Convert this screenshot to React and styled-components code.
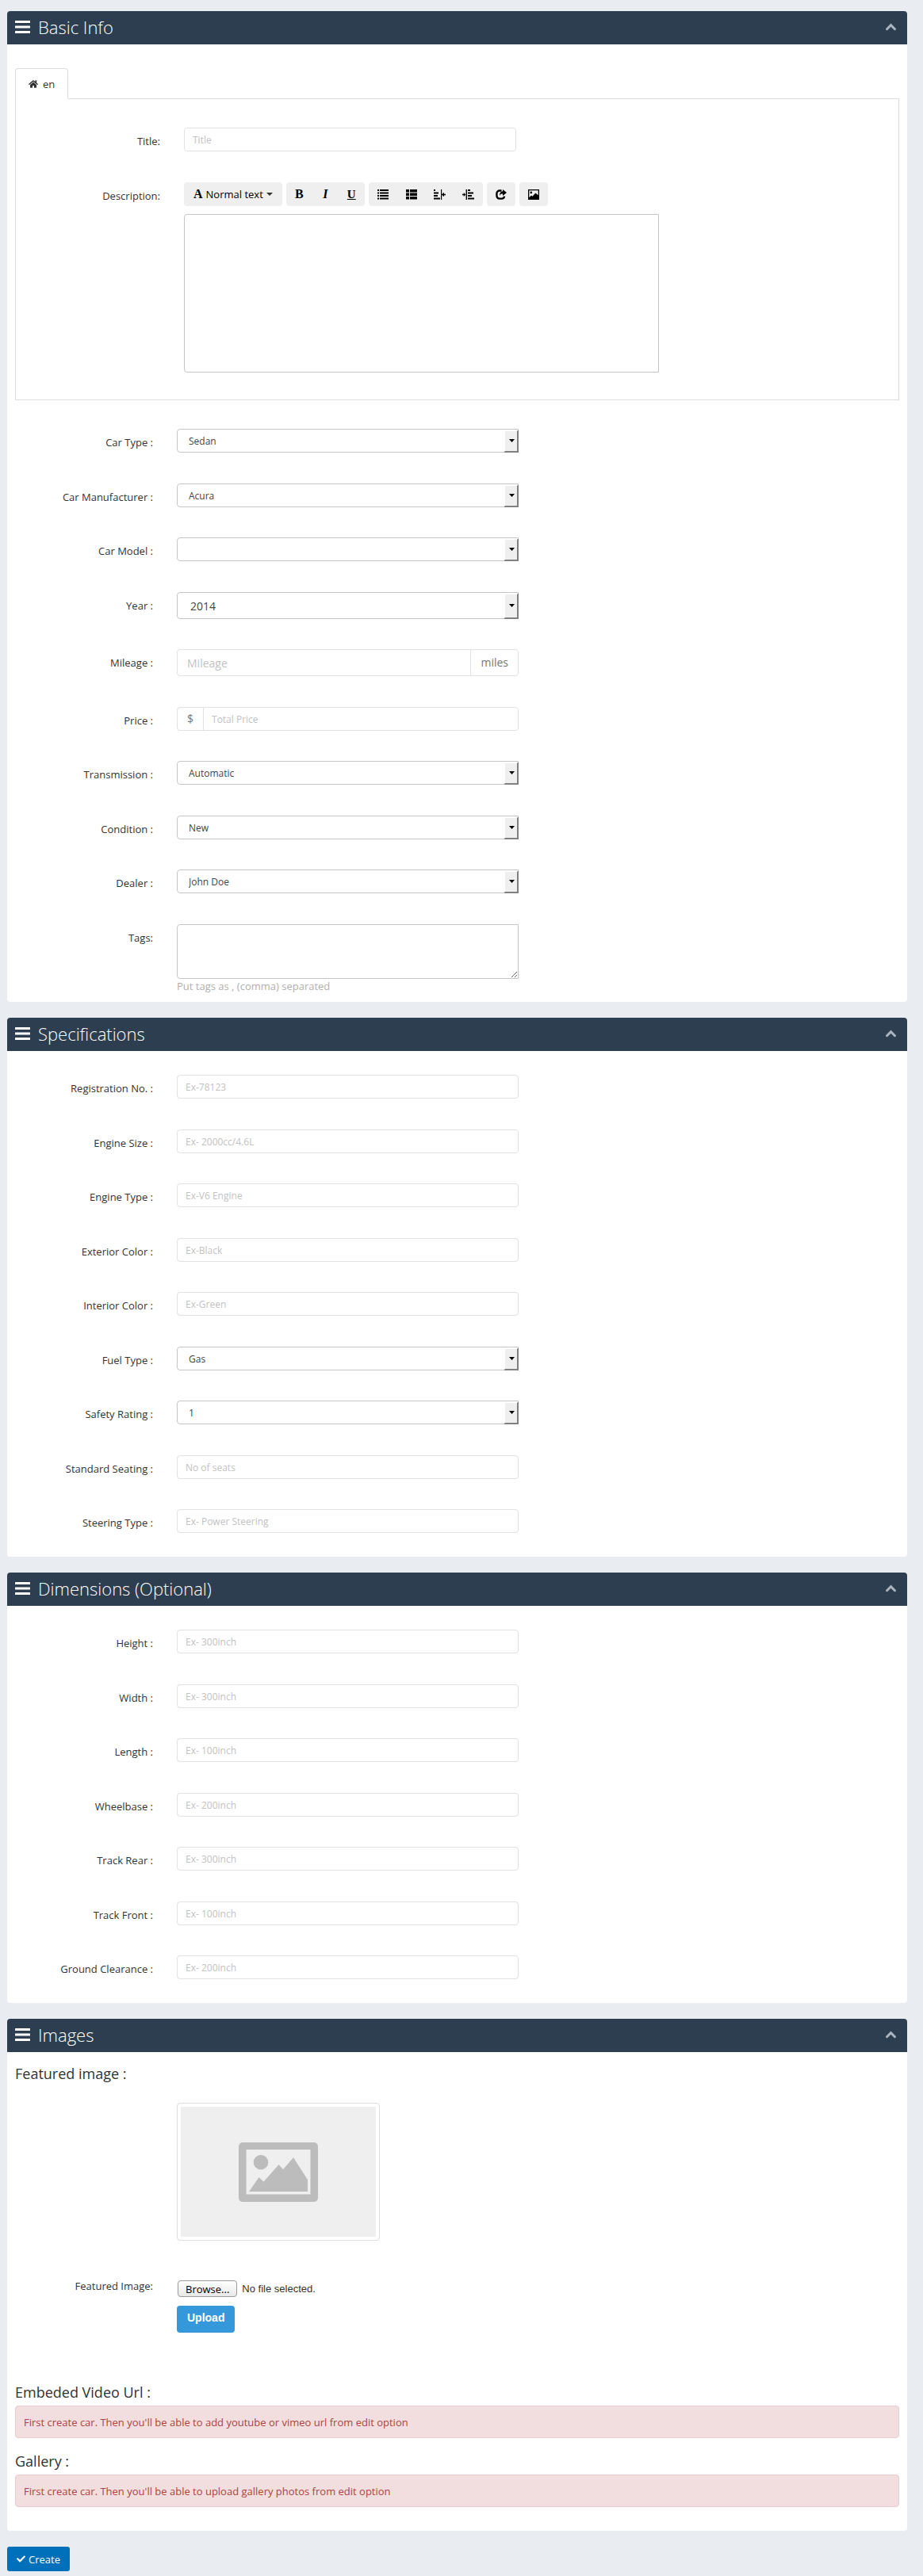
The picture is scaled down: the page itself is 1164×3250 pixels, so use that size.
import React, { useRef, useState } from 'react';
import styled, { createGlobalStyle } from 'styled-components';
import { FaHome, FaCheck } from 'react-icons/fa';

const GlobalStyle = createGlobalStyle`
  * {
    box-sizing: border-box;
  }

  body {
    margin: 0;
    background: #e9edf2;
    color: #333;
    font-family: 'Open Sans', 'Liberation Sans', sans-serif;
    font-size: 13px;
    line-height: 18px;
  }

  input, select, textarea, button {
    font-family: inherit;
  }
`;

const Page = styled.form`
  padding: 14px 20px 6px 9px;
`;

const Portlet = styled.section`
  margin-bottom: 20px;
  background: #fff;
  border-radius: 4px;
  overflow: hidden;
`;

const PortletHeader = styled.header`
  display: flex;
  align-items: center;
  gap: 10px;
  height: 42px;
  padding: 0 13px 2px 10px;
  background: #2c3e50;
  color: #fff;
`;

const PortletTitle = styled.h2`
  flex: 1;
  margin: 0;
  font-size: 22px;
  font-weight: 300;
  line-height: 40px;
`;

const CollapseButton = styled.button`
  display: flex;
  padding: 0;
  border: none;
  background: none;
  color: #a9b4c0;
  cursor: pointer;
`;

const PortletBody = styled.div`
  padding: 30px 10px ${props => (props.$tight ? '11px' : '30px')};
`;

const TabList = styled.div`
  display: flex;
`;

const Tab = styled.button`
  display: flex;
  align-items: center;
  gap: 6px;
  height: 39px;
  margin-bottom: -1px;
  padding: 0 16px;
  border: 1px solid #ddd;
  border-bottom-color: #fff;
  border-radius: 4px 4px 0 0;
  background: #fff;
  color: #333;
  font-size: 13px;
  z-index: 1;
`;

const TabPanel = styled.div`
  margin-bottom: 36px;
  padding: 36px 0 34px;
  border: 1px solid #ddd;
`;

/* rows sit on a 137px rhythm for every two fields */
const Fields = styled.div`
  display: flex;
  flex-direction: column;
`;

const Row = styled.div`
  display: flex;
  align-items: flex-start;
  margin-bottom: 39px;

  &:nth-child(even) {
    margin-bottom: 38px;
  }

  &:last-child {
    margin-bottom: 0;
  }
`;

const Label = styled.label`
  flex: none;
  width: ${props => (props.$wide ? '182px' : '174px')};
  padding-top: 8px;
  text-align: right;
`;

const Control = styled.div`
  flex: 1;
  max-width: ${props => props.$max || '431px'};
  margin-left: 30px;
`;

const Input = styled.input`
  display: block;
  width: 100%;
  height: ${props => (props.$large ? '34px' : '30px')};
  padding: 0 ${props => (props.$large ? '12px' : '10px')};
  border: 1px solid #e1e1e1;
  border-radius: 4px;
  background: #fff;
  color: #555;
  font-size: ${props => (props.$large ? '14px' : '12px')};

  &::placeholder {
    color: #c2c2c2;
  }
`;

const InputGroup = styled.div`
  display: flex;
  border: 1px solid #e1e1e1;
  border-radius: 4px;

  ${Input} {
    flex: 1;
    min-width: 0;
    height: ${props => (props.$large ? '32px' : '28px')};
    border: none;
  }
`;

const Addon = styled.span`
  display: flex;
  align-items: center;
  padding: 0 12px;
  border: 0 solid #e1e1e1;
  border-width: ${props => (props.$before ? '0 1px 0 0' : '0 0 0 1px')};
  color: #777;
  font-size: 14px;
`;

const SelectBox = styled.div`
  position: relative;

  &::after {
    content: '';
    position: absolute;
    top: 1px;
    right: 0;
    bottom: 0;
    width: 15px;
    border: 2px solid;
    border-color: #fff #808080 #808080 #fff;
    background: #efefef;
    pointer-events: none;
  }

  svg {
    position: absolute;
    top: 50%;
    right: 5px;
    margin-top: -2px;
    z-index: 1;
    pointer-events: none;
  }
`;

const Select = styled.select`
  display: block;
  width: 100%;
  height: ${props => (props.$large ? '34px' : '30px')};
  padding: 0 ${props => (props.$large ? '16px' : '14px')};
  border: 1px solid #c6c6c6;
  border-radius: 4px 0 0 4px;
  background: #fff;
  color: #444;
  font-size: ${props => (props.$large ? '14px' : '12px')};
  appearance: none;
`;

const TagsInput = styled.textarea`
  display: block;
  width: 100%;
  height: 69px;
  padding: 5px 10px;
  border: 1px solid #c6c6c6;
  border-radius: 4px 0 0 4px;
  font-size: 12px;
`;

const HelpText = styled.p`
  margin: 0;
  color: #b0b0b0;
`;

const Toolbar = styled.div`
  display: flex;
  flex-wrap: wrap;
  gap: 5px;
  margin-bottom: 10px;
`;

const ToolGroup = styled.div`
  display: flex;
  border-radius: 4px;
  background: #efefef;
`;

const ToolButton = styled.button`
  display: flex;
  align-items: center;
  justify-content: center;
  gap: 4px;
  min-width: ${props => (props.$letter ? '33px' : '36px')};
  height: 30px;
  padding: 0 ${props => (props.$menu ? '12px' : '0')};
  border: none;
  background: none;
  color: #000;
  font-size: 13px;
  cursor: pointer;
`;

const Glyph = styled.span`
  font-family: 'Liberation Serif', serif;
  font-size: ${props => (props.$underline ? '15px' : '16px')};
  font-weight: bold;
  font-style: ${props => (props.$italic ? 'italic' : 'normal')};
  text-decoration: ${props => (props.$underline ? 'underline' : 'none')};
`;

const Editor = styled.textarea`
  display: block;
  width: 100%;
  height: 200px;
  padding: 6px 10px;
  border: 1px solid #c6c6c6;
  border-radius: 4px 0 0 4px;
  font-size: 13px;
  resize: none;
`;

const ImagesBody = styled.div`
  padding: 15px 10px 30px;
`;

const SubHeading = styled.h3`
  margin: 0 0 5px;
  font-size: 18px;
  font-weight: 400;
  line-height: 24px;
`;

const Thumbnail = styled.div`
  width: 256px;
  margin: 25px 0 40px 204px;
  padding: 4px;
  border: 1px solid #ddd;
  border-radius: 4px;
`;

const Placeholder = styled.div`
  display: flex;
  align-items: center;
  justify-content: center;
  height: 164px;
  background: #efefef;
`;

const UploadRow = styled.div`
  display: flex;
  align-items: flex-start;
  margin-bottom: 63px;
`;

const FilePicker = styled.div`
  display: flex;
  align-items: center;
  gap: 6px;
  margin: 10px 0 11px 1px;
  font-family: 'Liberation Sans', sans-serif;
  font-size: 13px;

  input {
    display: none;
  }
`;

const BrowseButton = styled.button`
  height: 21px;
  padding: 0 9px;
  border: 1px solid #999;
  border-radius: 4px;
  background: linear-gradient(#fff, #e8e8e8);
  color: #000;
  font-family: 'Open Sans', sans-serif;
  font-size: 13px;
  line-height: 18px;
`;

const UploadButton = styled.button`
  height: 34px;
  padding: 0 13px 4px;
  border: none;
  border-radius: 4px;
  background: #3598db;
  color: #fff;
  font-family: 'Liberation Sans', sans-serif;
  font-size: 14px;
  font-weight: bold;
  cursor: pointer;
`;

const Alert = styled.div`
  margin-bottom: 17px;
  padding: 11px 10px 10px;
  border: 1px solid #e6cdd2;
  border-radius: 4px;
  background: #f2dede;
  color: #a94442;

  &:last-child {
    margin-bottom: 0;
  }
`;

const CreateButton = styled.button`
  display: flex;
  align-items: center;
  gap: 4px;
  height: 31px;
  padding: 0 12px;
  border: none;
  border-radius: 3px;
  background: #0070ba;
  color: #fff;
  font-size: 13px;
  font-weight: 500;
  cursor: pointer;
`;

const BarsIcon = () => (
  <svg width="19" height="16" viewBox="0 0 19 16" fill="#fff" aria-hidden="true">
    <rect width="19" height="3" rx="0.5" />
    <rect y="6.5" width="19" height="3" rx="0.5" />
    <rect y="13" width="19" height="3" rx="0.5" />
  </svg>
);

const ChevronUpIcon = () => (
  <svg width="15" height="10" viewBox="0 0 15 10" fill="none" stroke="currentColor" aria-hidden="true">
    <path d="M2.500 7.700L7.500 2.700L12.500 7.700" strokeWidth="3" strokeLinecap="round" />
  </svg>
);

const CaretIcon = () => (
  <svg width="8" height="4" viewBox="0 0 8 4" fill="#333" aria-hidden="true">
    <path d="M0 0h8L4 4z" />
  </svg>
);

const UnorderedIcon = () => (
  <svg width="14" height="13" viewBox="0 0 14 13" aria-hidden="true">
    <path d="M0 0h2v2H0zM3 0h11v2H3zM0 3.5h2v2H0zM3 3.5h11v2H3zM0 7h2v2H0zM3 7h11v2H3zM0 10.5h2v2H0zM3 10.5h11v2H3z" />
  </svg>
);

const OrderedIcon = () => (
  <svg width="14" height="13" viewBox="0 0 14 13" aria-hidden="true">
    <path d="M0 0h4v3.4H0zM5 0h9v3.4H5zM0 4.5h4v3.4H0zM5 4.5h9v3.4H5zM0 9h4v3.4H0zM5 9h9v3.4H5z" />
  </svg>
);

const OutdentIcon = () => (
  <svg width="15" height="13" viewBox="0 0 15 13" aria-hidden="true">
    <path d="M0 0h2v2H0zM0 3.5h6v2H0zM0 7h5v2H0zM0 10.5h8v2H0zM9 0h1.2v13H9zM10 6.4l3-2.600v2h2v1.400h-2v2z" />
  </svg>
);

const IndentIcon = () => (
  <svg width="15" height="13" viewBox="0 0 15 13" aria-hidden="true">
    <path d="M7 0h3v2H7zM7 3.5h7v2H7zM7 7h5v2H7zM7 10.5h8v2H7zM4.600 0H6v13H4.600zM4.400 6.400l-2.600-2.400v1.800H0v1.400h1.800V9z" />
  </svg>
);

const ShareIcon = () => (
  <svg width="14" height="13" viewBox="0 0 14 13" aria-hidden="true">
    <path d="M7.5 1.5H5A3.6 3.6 0 0 0 1.4 5v3A3.6 3.6 0 0 0 5 11.6h2.5A3.4 3.4 0 0 0 11 8.6" fill="none" stroke="#000" strokeWidth="2.4" />
    <path d="M9 0l5 4-5 4V5.600C7 5.600 6 6.200 5 8c0-3.600 1.400-5.400 4-5.700z" />
  </svg>
);

const PictureIcon = () => (
  <svg width="14" height="13" viewBox="0 0 14 13" aria-hidden="true">
    <path d="M0 0h14v13H0zM1.300 1.300v8.900L4 7.500l1.500 1.300L9.300 4.500l3.400 2.700V1.300z" fillRule="evenodd" />
    <circle cx="3.800" cy="3.900" r="1.400" />
  </svg>
);

const NoImageIcon = () => (
  <svg width="100" height="75" viewBox="0 0 100 75" fill="#bcbcbc" aria-hidden="true">
    <path d="M5 0h90a5 5 0 0 1 5 5v65a5 5 0 0 1-5 5H5a5 5 0 0 1-5-5V5a5 5 0 0 1 5-5zM9.500 9v56.500h81V9z" fillRule="evenodd" />
    <circle cx="28" cy="25" r="9.300" />
    <path d="M13 62l12.500-18 6 5.500 19-21.500 5.500 6 13-15 18 28v15z" />
  </svg>
);

const SelectField = ({ id, value, large }) => (
  <SelectBox>
    <Select id={id} $large={large} defaultValue={value}>
      <option value={value}>{value}</option>
    </Select>
    <svg width="7" height="4" viewBox="0 0 7 4" aria-hidden="true">
      <path d="M0 0h7L3.500 4z" />
    </svg>
  </SelectBox>
);

const Field = ({ id, label, select, value, placeholder, large }) => (
  <Row>
    <Label htmlFor={id}>{label}</Label>
    <Control>
      {select ? (
        <SelectField id={id} value={value} large={large} />
      ) : (
        <Input id={id} type="text" placeholder={placeholder} />
      )}
    </Control>
  </Row>
);

const Section = ({ title, children }) => {
  const [open, setOpen] = useState(true);

  return (
    <Portlet>
      <PortletHeader>
        <BarsIcon />
        <PortletTitle>{title}</PortletTitle>
        <CollapseButton type="button" aria-label={`Toggle ${title}`} onClick={() => setOpen(!open)}>
          <ChevronUpIcon />
        </CollapseButton>
      </PortletHeader>
      {open && children}
    </Portlet>
  );
};

const specifications = [
  { id: 'registration', label: 'Registration No. :', placeholder: 'Ex-78123' },
  { id: 'engine-size', label: 'Engine Size :', placeholder: 'Ex- 2000cc/4.6L' },
  { id: 'engine-type', label: 'Engine Type :', placeholder: 'Ex-V6 Engine' },
  { id: 'exterior', label: 'Exterior Color :', placeholder: 'Ex-Black' },
  { id: 'interior', label: 'Interior Color :', placeholder: 'Ex-Green' },
  { id: 'fuel', label: 'Fuel Type :', select: true, value: 'Gas' },
  { id: 'safety', label: 'Safety Rating :', select: true, value: '1' },
  { id: 'seating', label: 'Standard Seating :', placeholder: 'No of seats' },
  { id: 'steering', label: 'Steering Type :', placeholder: 'Ex- Power Steering' }
];

const dimensions = [
  { id: 'height', label: 'Height :', placeholder: 'Ex- 300inch' },
  { id: 'width', label: 'Width :', placeholder: 'Ex- 300inch' },
  { id: 'length', label: 'Length :', placeholder: 'Ex- 100inch' },
  { id: 'wheelbase', label: 'Wheelbase :', placeholder: 'Ex- 200inch' },
  { id: 'track-rear', label: 'Track Rear :', placeholder: 'Ex- 300inch' },
  { id: 'track-front', label: 'Track Front :', placeholder: 'Ex- 100inch' },
  { id: 'clearance', label: 'Ground Clearance :', placeholder: 'Ex- 200inch' }
];

const EditorToolbar = () => (
  <Toolbar>
    <ToolGroup>
      <ToolButton type="button" $menu>
        <Glyph>A</Glyph>
        <span>Normal text</span>
        <CaretIcon />
      </ToolButton>
    </ToolGroup>
    <ToolGroup>
      <ToolButton type="button" $letter><Glyph>B</Glyph></ToolButton>
      <ToolButton type="button" $letter><Glyph $italic>I</Glyph></ToolButton>
      <ToolButton type="button" $letter><Glyph $underline>U</Glyph></ToolButton>
    </ToolGroup>
    <ToolGroup>
      <ToolButton type="button" aria-label="Unordered list"><UnorderedIcon /></ToolButton>
      <ToolButton type="button" aria-label="Ordered list"><OrderedIcon /></ToolButton>
      <ToolButton type="button" aria-label="Outdent"><OutdentIcon /></ToolButton>
      <ToolButton type="button" aria-label="Indent"><IndentIcon /></ToolButton>
    </ToolGroup>
    <ToolGroup>
      <ToolButton type="button" aria-label="Insert link"><ShareIcon /></ToolButton>
    </ToolGroup>
    <ToolGroup>
      <ToolButton type="button" aria-label="Insert image"><PictureIcon /></ToolButton>
    </ToolGroup>
  </Toolbar>
);

const BasicInfo = () => (
  <Section title="Basic Info">
    <PortletBody $tight>
      <TabList role="tablist">
        <Tab type="button" role="tab" aria-selected="true">
          <FaHome size={12} />
          en
        </Tab>
      </TabList>
      <TabPanel role="tabpanel">
        <Fields>
          <Row>
            <Label $wide htmlFor="title">Title:</Label>
            <Control $max="419px">
              <Input id="title" type="text" placeholder="Title" />
            </Control>
          </Row>
          <Row>
            <Label $wide htmlFor="description">Description:</Label>
            <Control $max="599px">
              <EditorToolbar />
              <Editor id="description" />
            </Control>
          </Row>
        </Fields>
      </TabPanel>
      <Fields>
        <Field id="car-type" label="Car Type :" select value="Sedan" />
        <Field id="manufacturer" label="Car Manufacturer :" select value="Acura" />
        <Field id="model" label="Car Model :" select value="" />
        <Field id="year" label="Year :" select large value="2014" />
        <Row>
          <Label htmlFor="mileage">Mileage :</Label>
          <Control>
            <InputGroup $large>
              <Input id="mileage" type="text" $large placeholder="Mileage" />
              <Addon>miles</Addon>
            </InputGroup>
          </Control>
        </Row>
        <Row>
          <Label htmlFor="price">Price :</Label>
          <Control>
            <InputGroup>
              <Addon $before>$</Addon>
              <Input id="price" type="text" placeholder="Total Price" />
            </InputGroup>
          </Control>
        </Row>
        <Field id="transmission" label="Transmission :" select value="Automatic" />
        <Field id="condition" label="Condition :" select value="New" />
        <Field id="dealer" label="Dealer :" select value="John Doe" />
        <Row>
          <Label htmlFor="tags">Tags:</Label>
          <Control>
            <TagsInput id="tags" />
            <HelpText>Put tags as , (comma) separated</HelpText>
          </Control>
        </Row>
      </Fields>
    </PortletBody>
  </Section>
);

const Images = () => {
  const fileInput = useRef(null);
  const [fileName, setFileName] = useState('No file selected.');

  const handleFileChange = (e) => {
    const file = e.target.files[0];
    setFileName(file ? file.name : 'No file selected.');
  };

  return (
    <Section title="Images">
      <ImagesBody>
        <SubHeading>Featured image :</SubHeading>
        <Thumbnail>
          <Placeholder>
            <NoImageIcon />
          </Placeholder>
        </Thumbnail>
        <UploadRow>
          <Label htmlFor="featured">Featured Image:</Label>
          <Control>
            <FilePicker>
              <input id="featured" type="file" ref={fileInput} onChange={handleFileChange} />
              <BrowseButton type="button" onClick={() => fileInput.current.click()}>
                Browse...
              </BrowseButton>
              <span>{fileName}</span>
            </FilePicker>
            <UploadButton type="button">Upload</UploadButton>
          </Control>
        </UploadRow>
        <SubHeading>Embeded Video Url :</SubHeading>
        <Alert>First create car. Then you'll be able to add youtube or vimeo url from edit option</Alert>
        <SubHeading>Gallery :</SubHeading>
        <Alert>First create car. Then you'll be able to upload gallery photos from edit option</Alert>
      </ImagesBody>
    </Section>
  );
};

const App = () => (
  <>
    <GlobalStyle />
    <Page onSubmit={(e) => e.preventDefault()}>
      <BasicInfo />
      <Section title="Specifications">
        <PortletBody>
          <Fields>
            {specifications.map((field) => (
              <Field key={field.id} {...field} />
            ))}
          </Fields>
        </PortletBody>
      </Section>
      <Section title="Dimensions (Optional)">
        <PortletBody>
          <Fields>
            {dimensions.map((field) => (
              <Field key={field.id} {...field} />
            ))}
          </Fields>
        </PortletBody>
      </Section>
      <Images />
      <CreateButton type="submit">
        <FaCheck size={11} />
        Create
      </CreateButton>
    </Page>
  </>
);

export default App;
